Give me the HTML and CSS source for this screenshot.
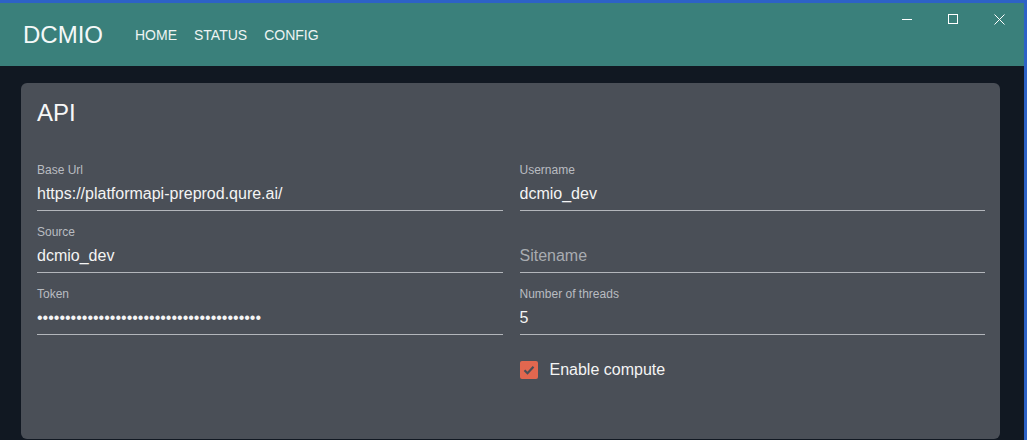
FILE: index.html
```html
<!DOCTYPE html>
<html lang="en">
<head>
  <meta charset="UTF-8" />
  <title>DCMIO</title>
  <link rel="stylesheet" href="styles.css">
</head>
<body>

<div class="window">
  <header class="topbar">
    <div class="brand">DCMIO</div>
    <nav class="nav">
      <a href="#">HOME</a>
      <a href="#">STATUS</a>
      <a href="#">CONFIG</a>
    </nav>
    <div class="win-controls">
      <button class="win-btn" title="Minimize">
        <svg width="10" height="10" viewBox="0 0 10 10"><path d="M0 5.5h10" stroke="#fff" stroke-width="1"/></svg>
      </button>
      <button class="win-btn" title="Maximize">
        <svg width="10" height="10" viewBox="0 0 10 10"><rect x="0.5" y="0.5" width="9" height="9" fill="none" stroke="#fff" stroke-width="1"/></svg>
      </button>
      <button class="win-btn" title="Close">
        <svg width="11" height="11" viewBox="0 0 11 11"><path d="M0.5 0.5l10 10M10.5 0.5l-10 10" stroke="#fff" stroke-width="1"/></svg>
      </button>
    </div>
  </header>

  <main class="content">
    <section class="card">
      <h2 class="card-title">API</h2>

      <div class="form-grid">
        <div class="field">
          <label>Base Url</label>
          <input type="text" value="https://platformapi-preprod.qure.ai/">
        </div>
        <div class="field">
          <label>Username</label>
          <input type="text" value="dcmio_dev">
        </div>

        <div class="field">
          <label>Source</label>
          <input type="text" value="dcmio_dev">
        </div>
        <div class="field">
          <label>&nbsp;</label>
          <input type="text" placeholder="Sitename">
        </div>

        <div class="field">
          <label>Token</label>
          <input type="password" value="0123456789012345678901234567890123456789">
        </div>
        <div class="field">
          <label>Number of threads</label>
          <input type="text" value="5">
        </div>

        <div></div>
        <label class="check">
          <span class="check-box">
            <svg width="18" height="18" viewBox="0 0 18 18"><path d="M4.5 9.2l3 3 6-6.4" fill="none" stroke="#4a4f57" stroke-width="2.2"/></svg>
          </span>
          Enable compute
        </label>
      </div>
    </section>
  </main>
</div>

</body>
</html>
```

FILE: styles.css
```css
body {
  margin: 0;
  font-family: "Liberation Sans", Arial, sans-serif;
  background: #2d62c6;
  overflow: hidden;
}
.window {
  margin-top: 3px;
  margin-right: 3px;
  height: 437px;
  background: #111822;
}
.topbar {
  height: 63px;
  background: #3a807b;
  display: flex;
  align-items: center;
  padding-left: 23px;
  position: relative;
}
.brand {
  color: #f4f8f8;
  font-size: 24px;
  margin-top: 1px;
}
.nav {
  display: flex;
  gap: 17px;
  margin-left: 32px;
  margin-top: 1px;
}
.nav a {
  color: #eef4f3;
  text-decoration: none;
  font-size: 14px;
}
.win-controls {
  position: absolute;
  top: 0;
  right: 2px;
  display: flex;
}
.win-btn {
  width: 46px;
  height: 32px;
  background: none;
  border: none;
  padding: 0;
  display: flex;
  align-items: center;
  justify-content: center;
}
.content {
  padding: 17px 24px 0 21px;
}
.card {
  background: #4a4f57;
  border-radius: 6px;
  padding: 16px 15px 0 16px;
  height: 356px;
  box-sizing: border-box;
}
.card-title {
  margin: 0;
  color: #f7f7f7;
  font-size: 24px;
  font-weight: normal;
  line-height: 28px;
}
.form-grid {
  display: grid;
  grid-template-columns: 1fr 1fr;
  column-gap: 17px;
  row-gap: 14px;
  margin-top: 36px;
}
.field {
  display: flex;
  flex-direction: column;
}
.field label {
  font-size: 12px;
  line-height: 14px;
  color: #b9bcc1;
  margin-bottom: 7px;
}
.field input {
  background: none;
  border: none;
  border-bottom: 1px solid #b3b6bb;
  color: #f4f4f4;
  font-family: "Liberation Sans", Arial, sans-serif;
  font-size: 16px;
  line-height: 20px;
  height: 20px;
  padding: 0 0 6px 0;
  outline: none;
}
.field input::placeholder {
  color: #a9acb1;
}
.check {
  display: flex;
  align-items: center;
  gap: 12px;
  color: #f4f4f4;
  font-size: 16px;
  margin-top: 12px;
}
.check-box {
  width: 18px;
  height: 18px;
  background: #e2674f;
  border-radius: 2px;
  display: block;
}
.check-box svg {
  display: block;
}
```
